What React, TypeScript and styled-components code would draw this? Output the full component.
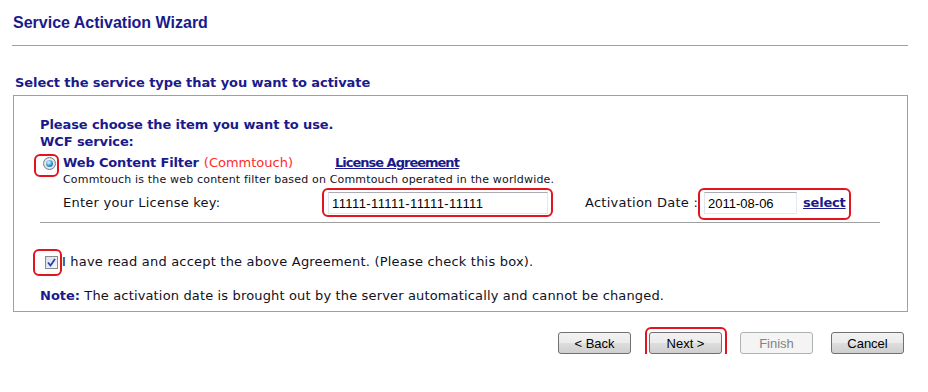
import React from "react";
import styled, { createGlobalStyle } from "styled-components";

const GlobalStyle = createGlobalStyle`
  html, body { margin: 0; padding: 0; background: #ffffff; }
  body { font-family: "DejaVu Sans", Verdana, sans-serif; color: #111122; }
`;

const NAVY = "#1a1a8c";

const Page = styled.div`
  width: 896px;
  padding: 13px 0 0 12px;
  display: flex;
  flex-direction: column;
`;

const Title = styled.h1`
  margin: 0;
  font-family: "Liberation Sans", Arial, sans-serif;
  font-size: 16px;
  line-height: 20px;
  font-weight: bold;
  color: ${NAVY};
  padding-left: 1px;
`;

const Rule = styled.div`
  margin-top: 12px;
  height: 1px;
  background: #a0a0a0;
`;

const SectionTitle = styled.h2`
  margin: 29px 0 4px 3px;
  font-size: 13px;
  line-height: 16px;
  font-weight: bold;
  letter-spacing: -0.08px;
  color: ${NAVY};
`;

const Panel = styled.div`
  margin-left: 1px;
  border: 1px solid #a0a0a0;
  padding: 20px 27px 7px 26px;
  display: flex;
  flex-direction: column;
  font-size: 13px;
  line-height: 16px;
  letter-spacing: 0.25px;
`;

const Strong = styled.div`
  font-weight: bold;
  line-height: 17px;
  letter-spacing: -0.1px;
  color: ${NAVY};
`;

const OptionRow = styled.div`
  display: flex;
  align-items: center;
  height: 16px;
  margin-top: 5px;
`;

const OptionMain = styled.div`
  width: 295px;
  display: flex;
  align-items: center;
`;

const OptionName = styled.span`
  font-weight: bold;
  letter-spacing: -0.15px;
  color: ${NAVY};
  margin-left: 7px;
`;

const Vendor = styled.span`
  color: #ff2a2a;
  letter-spacing: 0;
  margin-left: 5px;
`;

const Link = styled.a<{ $tight?: boolean }>`
  font-weight: bold;
  color: ${NAVY};
  text-decoration: underline;
  letter-spacing: ${(p) => (p.$tight ? "-1px" : "-0.2px")};
  cursor: pointer;
`;

const Desc = styled.div`
  padding-left: 23px;
  font-size: 11px;
  line-height: 14px;
  letter-spacing: 0.17px;
  margin-top: 2px;
`;

const Highlight = styled.span<{ $pad?: string }>`
  position: relative;
  display: inline-flex;
  align-items: center;
  &::after {
    content: "";
    position: absolute;
    inset: ${(p) => p.$pad || "-4px"};
    border: 2px solid #e3141e;
    border-radius: 6px;
    pointer-events: none;
  }
`;

const Radio = styled.span`
  width: 13px;
  height: 13px;
  margin-left: 3px;
  box-sizing: border-box;
  border-radius: 50%;
  border: 1px solid #7c7c7c;
  background: radial-gradient(circle at 50% 50%, #f4f4f4 0 45%, #cfd3d8 80%);
  display: flex;
  align-items: center;
  justify-content: center;
  &::before {
    content: "";
    width: 7px;
    height: 7px;
    border-radius: 50%;
    background: radial-gradient(circle at 40% 35%, #b8e6fa 0 15%, #2f90cf 55%, #0f4f8a 100%);
  }
`;

const KeyRow = styled.div`
  display: flex;
  align-items: center;
  padding-left: 23px;
  margin-top: 4px;
  height: 24px;
`;

const KeyLabel = styled.span`
  width: 265px;
`;

const DateLabel = styled.span`
  margin-left: 37px;
  margin-right: 6px;
`;

const TextInput = styled.input<{ $w: number; $spacing?: number }>`
  width: ${(p) => p.$w}px;
  height: 22px;
  box-sizing: border-box;
  border: 1px solid;
  border-color: #abadb3 #e3e9ef #e3e9ef #e2e3ea;
  padding: 0 0 0 3px;
  font-family: "Liberation Sans", Arial, sans-serif;
  font-size: 13px;
  letter-spacing: ${(p) => p.$spacing ?? 0}px;
  color: #000;
  background: #fff;
  outline: none;
`;

const SelectLink = styled(Link)`
  margin-left: 6px;
`;

const Divider = styled.div`
  height: 1px;
  background: #a0a0a0;
  margin-top: 7px;
`;

const CheckRow = styled.label`
  display: flex;
  align-items: center;
  margin-top: 31px;
  height: 16px;
`;

const CheckBox = styled.span`
  width: 13px;
  height: 13px;
  margin-left: 5px;
  box-sizing: border-box;
  border: 1px solid #8a8a8a;
  background: linear-gradient(135deg, #d8dfea, #f6f8fb);
  display: flex;
  align-items: center;
  justify-content: center;
`;

const CheckText = styled.span`
  margin-left: 4px;
  letter-spacing: 0.2px;
`;

const Note = styled.div`
  margin-top: 18px;
  letter-spacing: 0.15px;
  b {
    color: ${NAVY};
    letter-spacing: 0;
  }
`;

const ButtonBar = styled.div`
  display: flex;
  justify-content: flex-end;
  gap: 18px;
  margin-top: 20px;
  padding-right: 4px;
`;

const Button = styled.button`
  width: 73px;
  height: 22px;
  box-sizing: border-box;
  border: 1px solid #707070;
  border-radius: 3px;
  background: linear-gradient(#f2f2f2 0%, #ebebeb 50%, #dddddd 51%, #cfcfcf 100%);
  font-family: "Liberation Sans", Arial, sans-serif;
  font-size: 13px;
  color: #000;
  padding: 0;
  &:disabled {
    border-color: #adb2b5;
    background: #f4f4f4;
    color: #838383;
  }
`;

export default function App() {
  return (
    <>
      <GlobalStyle />
      <Page>
        <Title>Service Activation Wizard</Title>
        <Rule />
        <SectionTitle>Select the service type that you want to activate</SectionTitle>
        <Panel>
          <Strong>Please choose the item you want to use.</Strong>
          <Strong>WCF service:</Strong>
          <OptionRow>
            <OptionMain>
              <Highlight $pad="-3px -3px -7px -6px">
                <Radio />
              </Highlight>
              <OptionName>Web Content Filter</OptionName>
              <Vendor>(Commtouch)</Vendor>
            </OptionMain>
            <Link $tight>License Agreement</Link>
          </OptionRow>
          <Desc>Commtouch is the web content filter based on Commtouch operated in the worldwide.</Desc>
          <KeyRow>
            <KeyLabel>Enter your License key:</KeyLabel>
            <Highlight $pad="-4px -5px -3px -6px">
              <TextInput $w={220} $spacing={0.4} defaultValue="11111-11111-11111-11111" />
            </Highlight>
            <DateLabel>Activation Date :</DateLabel>
            <Highlight $pad="-4px -5px -6px -6px">
              <TextInput $w={93} defaultValue="2011-08-06" />
              <SelectLink>select</SelectLink>
            </Highlight>
          </KeyRow>
          <Divider />
          <CheckRow>
            <Highlight $pad="-7px -4px -7px -7px">
              <CheckBox>
                <svg width="9" height="9" viewBox="0 0 9 9">
                  <path d="M1 4.5 L3.5 7.5 L8 1" stroke="#2a3fb0" strokeWidth="1.8" fill="none" />
                </svg>
              </CheckBox>
            </Highlight>
            <CheckText>I have read and accept the above Agreement. (Please check this box).</CheckText>
          </CheckRow>
          <Note>
            <b>Note:</b> The activation date is brought out by the server automatically and cannot be changed.
          </Note>
        </Panel>
        <ButtonBar>
          <Button>&lt; Back</Button>
          <Highlight $pad="-5px -5px -5px -4px">
            <Button>Next &gt;</Button>
          </Highlight>
          <Button disabled>Finish</Button>
          <Button>Cancel</Button>
        </ButtonBar>
      </Page>
    </>
  );
}
